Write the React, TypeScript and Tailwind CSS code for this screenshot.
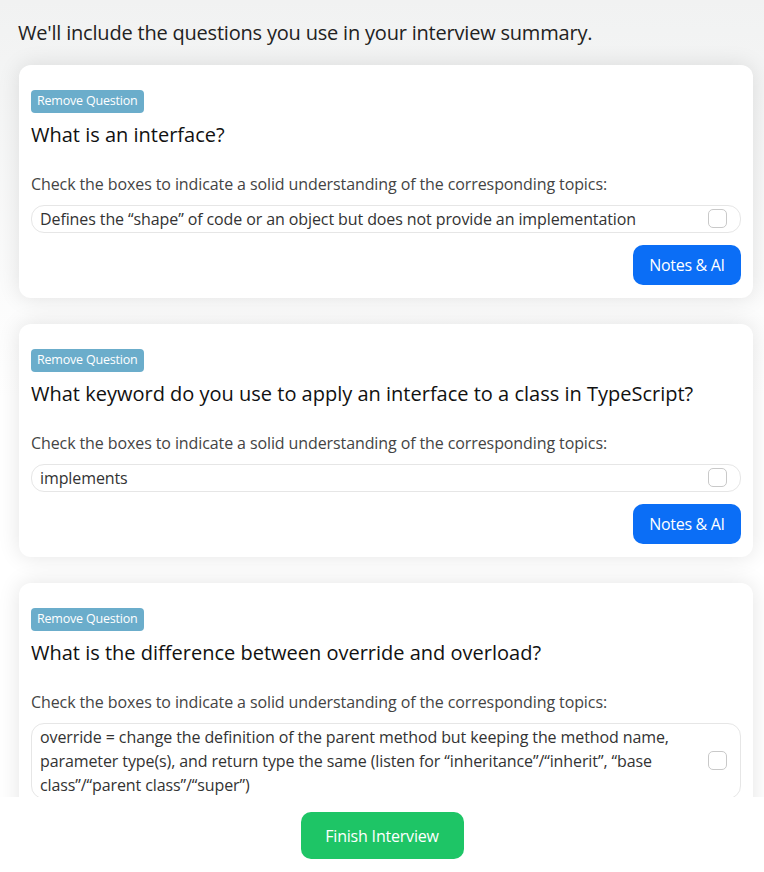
import React from "react";

const questions = [
  {
    title: "What is an interface?",
    topics: ["Defines the \u201cshape\u201d of code or an object but does not provide an implementation"],
  },
  {
    title: "What keyword do you use to apply an interface to a class in TypeScript?",
    topics: ["implements"],
  },
  {
    title: "What is the difference between override and overload?",
    topics: [
      "override = change the definition of the parent method but keeping the method name, parameter type(s), and return type the same (listen for \u201cinheritance\u201d/\u201cinherit\u201d, \u201cbase class\u201d/\u201cparent class\u201d/\u201csuper\u201d)",
    ],
  },
];

function Card({ title, topics }: { title: string; topics: string[] }) {
  return (
    <div className="bg-white rounded-[12px] shadow-[0_0_22px_rgba(0,0,0,0.11)] px-3 pt-[22px] pb-[13px]">
      <div className="inline-flex h-[23px] items-center rounded-[4px] bg-[#6badcb] px-[6px] text-[12.5px] font-medium tracking-[-0.2px] text-white">
        Remove Question
      </div>
      <div className="mt-[9px] text-[20px] font-medium leading-[26px] text-[#111]">{title}</div>
      <div className="mt-[26px] text-[16px] leading-[20px] tracking-[-0.1px] text-[#444]">
        Check the boxes to indicate a solid understanding of the corresponding topics:
      </div>
      <div className="mt-[11px] flex flex-col gap-2">
        {topics.map((t) => (
          <div
            key={t}
            className="flex items-center justify-between rounded-[13px] border border-[#e6e6e6] pl-[8px] pr-[13px] py-[1px]"
          >
            <span className="text-[16px] leading-[24px] tracking-[-0.1px] text-[#333] pr-8">{t}</span>
            <span className="h-[19px] w-[19px] shrink-0 rounded-[5px] border-[1.5px] border-[#c9c9c9] bg-white" />
          </div>
        ))}
      </div>
      <div className="mt-[12px] flex justify-end">
        <button className="h-[40px] w-[108px] rounded-[10px] bg-[#0b6ef6] text-[16px] tracking-[-0.3px] text-white">
          Notes &amp; AI
        </button>
      </div>
    </div>
  );
}

export default function App() {
  return (
    <div
      className="flex h-[872px] w-[764px] flex-col overflow-hidden bg-white"
      style={{ fontFamily: "'Open Sans', Lato, sans-serif" }}
    >
      <div className="relative h-[797px] overflow-hidden bg-gradient-to-b from-[#f1f2f2] via-white to-white">
        <div className="px-[18px] pt-[20px] pb-[13px] text-[20px] leading-[26px] tracking-[-0.2px] text-[#222]">
          We'll include the questions you use in your interview summary.
        </div>
        <div className="flex flex-col gap-[26px] pl-[19px] pr-[11px] pt-[6px]">
          {questions.map((q) => (
            <Card key={q.title} title={q.title} topics={q.topics} />
          ))}
        </div>
      </div>
      <div className="flex flex-1 items-start justify-center bg-white pt-[15px]">
        <button className="h-[47px] w-[163px] rounded-[10px] bg-[#1ec566] text-[16px] tracking-[-0.2px] text-white">
          Finish Interview
        </button>
      </div>
    </div>
  );
}
